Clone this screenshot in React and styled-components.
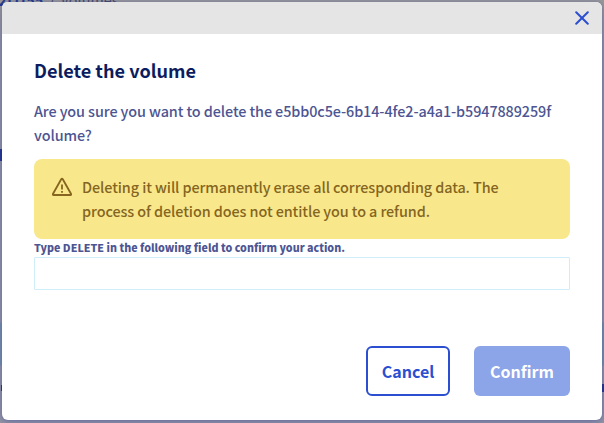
import React from "react";
import styled, { createGlobalStyle } from "styled-components";

const GlobalStyle = createGlobalStyle`
  *, *::before, *::after { box-sizing: border-box; }
  body {
    margin: 0;
    overflow: hidden;
    font-family: "Source Sans Pro", "Noto Sans CJK SC", sans-serif;
    color: #4d5592;
  }
`;

const Page = styled.div`
  position: relative;
  height: 423px;
  padding: 2px 2px 3px;
  overflow: hidden;
  background: linear-gradient(#999 0, #999 12px, #9294a3 40px, #9294a3 322px, #7890a8 323px, #7890a8 365px, #9294a3 366px);
`;

const Breadcrumb = styled.div`
  position: absolute;
  left: -10px;
  top: -8px;
  display: flex;
  gap: 6px;
  font-size: 14.4px;
  line-height: 16px;
  color: #4a4c66;
`;

const Current = styled.span`
  color: #263c8e;
  font-weight: 700;
`;

const Mark = styled.span`
  position: absolute;
  left: ${(p) => p.$x}px;
  top: ${(p) => p.$y}px;
  width: 2px;
  height: ${(p) => p.$h}px;
  background: #29398a;
`;

const Dialog = styled.section`
  position: relative;
  display: flex;
  flex-direction: column;
  height: 418px;
  border-radius: 6px;
  overflow: hidden;
  background: #fff;
  box-shadow: 0 1px 6px rgba(0, 14, 156, 0.35);
`;

const Header = styled.header`
  display: flex;
  flex: none;
  justify-content: flex-end;
  align-items: center;
  height: 32px;
  padding-right: 13px;
  background: #e5e5e5;
`;

const CloseButton = styled.button`
  display: flex;
  padding: 0;
  border: 0;
  background: none;
  color: #2b4fd0;
`;

const Body = styled.div`
  display: flex;
  flex: 1;
  flex-direction: column;
  padding: 24px 32px 24px;
`;

const Title = styled.h1`
  margin: 0 0 16px;
  font-size: 18.1px;
  line-height: 25px;
  font-weight: 700;
  color: #0b1d60;
`;

const Message = styled.p`
  margin: 0 0 12px;
  font-size: 14.4px;
  font-weight: 500;
  letter-spacing: -0.09px;
  line-height: 24px;
`;

const Alert = styled.div`
  display: flex;
  gap: 9px;
  height: 80px;
  padding: 16px;
  border-radius: 8px;
  background: #f8e88b;
  color: #85651f;
  font-size: 14.4px;
  font-weight: 500;
  letter-spacing: -0.08px;
  line-height: 24px;
  svg { flex: none; }
`;

const Label = styled.label`
  font-size: 10.7px;
  line-height: 18px;
  font-weight: 900;
`;

const Input = styled.input`
  width: 100%;
  height: 33px;
  padding: 0 8px;
  border: 1px solid #cfeefa;
  border-radius: 1px;
  outline: none;
`;

const Actions = styled.footer`
  display: flex;
  justify-content: flex-end;
  gap: 24px;
  margin-top: auto;
`;

const Button = styled.button`
  width: ${(p) => (p.$primary ? 96 : 84)}px;
  height: 50px;
  padding: 0 0 1px;
  border: ${(p) => (p.$primary ? "0" : "2px solid #2b4fd0")};
  border-radius: 6px;
  background: ${(p) => (p.$primary ? "#8ca4e8" : "#fff")};
  color: ${(p) => (p.$primary ? "#fff" : "#2b4fd0")};
  font: 700 16px "Source Sans Pro", "Noto Sans CJK SC", sans-serif;
`;

const CloseIcon = () => (
  <svg width="14" height="14" viewBox="0 0 14 14" fill="none" stroke="currentColor" strokeWidth="2" strokeLinecap="round">
    <path d="M1.2 1.2l11.6 11.6M12.8 1.2L1.2 12.8" />
  </svg>
);

const WarningIcon = () => (
  <svg width="23" height="24" viewBox="0 0 23 24" fill="none" stroke="currentColor" strokeWidth="1.8" strokeLinejoin="round">
    <path d="M11.2 4.3Q12 3.2 12.8 4.3L21.1 19Q21.4 20 20.5 20H3.5Q2.6 20 2.9 19Z" />
    <path d="M12 9.5v5M12 16v1.8" />
  </svg>
);

export default function App() {
  return (
    <>
      <GlobalStyle />
      <Page>
        <Breadcrumb>
          <Current>02f1f55</Current>
          <span>/</span>
          <span>Volumes</span>
        </Breadcrumb>
        <Mark $x={0} $y={149} $h={12} />
        <Mark $x={1} $y={385} $h={6} />
        <Mark $x={602} $y={384} $h={8} />
        <Dialog role="dialog">
          <Header>
            <CloseButton aria-label="Close"><CloseIcon /></CloseButton>
          </Header>
          <Body>
            <Title>Delete the volume</Title>
            <Message>
              Are you sure you want to delete the e5bb0c5e-6b14-4fe2-a4a1-b5947889259f
              <br />
              volume?
            </Message>
            <Alert>
              <WarningIcon />
              <span>
                Deleting it will permanently erase all corresponding data. The
                <br />
                process of deletion does not entitle you to a refund.
              </span>
            </Alert>
            <Label htmlFor="confirmation">Type DELETE in the following field to confirm your action.</Label>
            <Input id="confirmation" />
            <Actions>
              <Button>Cancel</Button>
              <Button $primary disabled>Confirm</Button>
            </Actions>
          </Body>
        </Dialog>
      </Page>
    </>
  );
}
